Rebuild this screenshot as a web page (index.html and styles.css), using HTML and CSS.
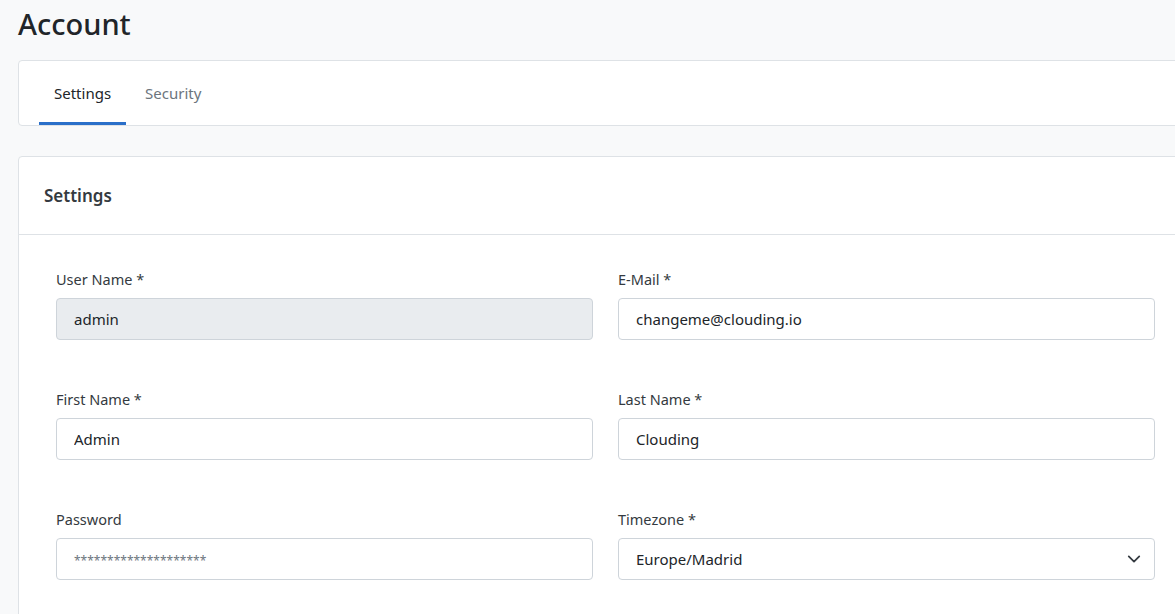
FILE: index.html
```html
<!DOCTYPE html>
<html lang="en">
<head>
    <meta charset="UTF-8">
    <meta name="viewport" content="width=device-width, initial-scale=1.0">
    <title>Account</title>
    <link rel="stylesheet" href="styles.css">
</head>
<body>
    <div class="page">
        <h1 class="page-title">Account</h1>

        <div class="card tabs-card">
            <ul class="tabs">
                <li class="tab active">Settings</li>
                <li class="tab">Security</li>
            </ul>
        </div>

        <div class="card">
            <div class="card-header">Settings</div>
            <div class="card-body">
                <div class="form-grid">
                    <div class="field">
                        <label>User Name *</label>
                        <input class="input" type="text" value="admin" disabled>
                    </div>
                    <div class="field">
                        <label>E-Mail *</label>
                        <input class="input" type="text" value="changeme@clouding.io">
                    </div>
                    <div class="field">
                        <label>First Name *</label>
                        <input class="input" type="text" value="Admin">
                    </div>
                    <div class="field">
                        <label>Last Name *</label>
                        <input class="input" type="text" value="Clouding">
                    </div>
                    <div class="field">
                        <label>Password</label>
                        <input class="input password" type="text" placeholder="********************">
                    </div>
                    <div class="field">
                        <label>Timezone *</label>
                        <div class="select">
                            <span>Europe/Madrid</span>
                            <svg width="14" height="14" viewBox="0 0 16 16"><path d="M2 5l6 6 6-6" fill="none" stroke="#343a40" stroke-width="2" stroke-linecap="round" stroke-linejoin="round"/></svg>
                        </div>
                    </div>
                </div>
            </div>
        </div>
    </div>
</body>
</html>
```

FILE: styles.css
```css
html, body {
    overflow: hidden;
}

body {
    margin: 0;
    background: #f8f9fa;
    font-family: "Segoe UI", "Noto Sans", sans-serif;
    color: #212529;
}

.page {
    width: 1175px;
    padding: 0 0 40px 18px;
}

.page-title {
    margin: 0;
    padding-top: 4px;
    font-size: 29px;
    font-weight: 500;
    line-height: 40px;
    color: #212529;
}

.card {
    background: #fff;
    border: 1px solid #dee2e6;
    border-radius: 4px;
}

.tabs-card {
    margin-top: 16px;
    margin-bottom: 30px;
    padding: 0 20px;
}

.tabs {
    list-style: none;
    margin: 0;
    padding: 0;
    display: flex;
    gap: 4px;
}

.tab {
    height: 64px;
    padding: 2px 15px 0;
    display: flex;
    align-items: center;
    box-sizing: border-box;
    border-bottom: 3px solid transparent;
    font-size: 15px;
    color: #6c757d;
}

.tab.active {
    color: #212529;
    border-bottom-color: #2a6fc9;
}

.card-header {
    height: 77px;
    padding: 0 25px;
    display: flex;
    align-items: center;
    border-bottom: 1px solid #dee2e6;
    font-size: 17px;
    font-weight: 600;
    color: #343a40;
}

.card-body {
    padding: 33px 37px 40px;
}

.form-grid {
    display: grid;
    grid-template-columns: 1fr 1fr;
    column-gap: 25px;
    row-gap: 48px;
}

.field label {
    display: block;
    margin-bottom: 8px;
    font-size: 14.5px;
    line-height: 22px;
    color: #343a40;
}

.input,
.select {
    width: 100%;
    height: 42px;
    box-sizing: border-box;
    padding: 0 17px;
    border: 1px solid #ced4da;
    border-radius: 4px;
    background: #fff;
    font-family: inherit;
    font-size: 15px;
    color: #212529;
}

.input:disabled {
    background: #e9ecef;
    color: #212529;
}

.input::placeholder {
    color: #6c757d;
    font-size: 12px;
}

.select {
    display: flex;
    align-items: center;
    justify-content: space-between;
    padding-right: 13px;
}
```
